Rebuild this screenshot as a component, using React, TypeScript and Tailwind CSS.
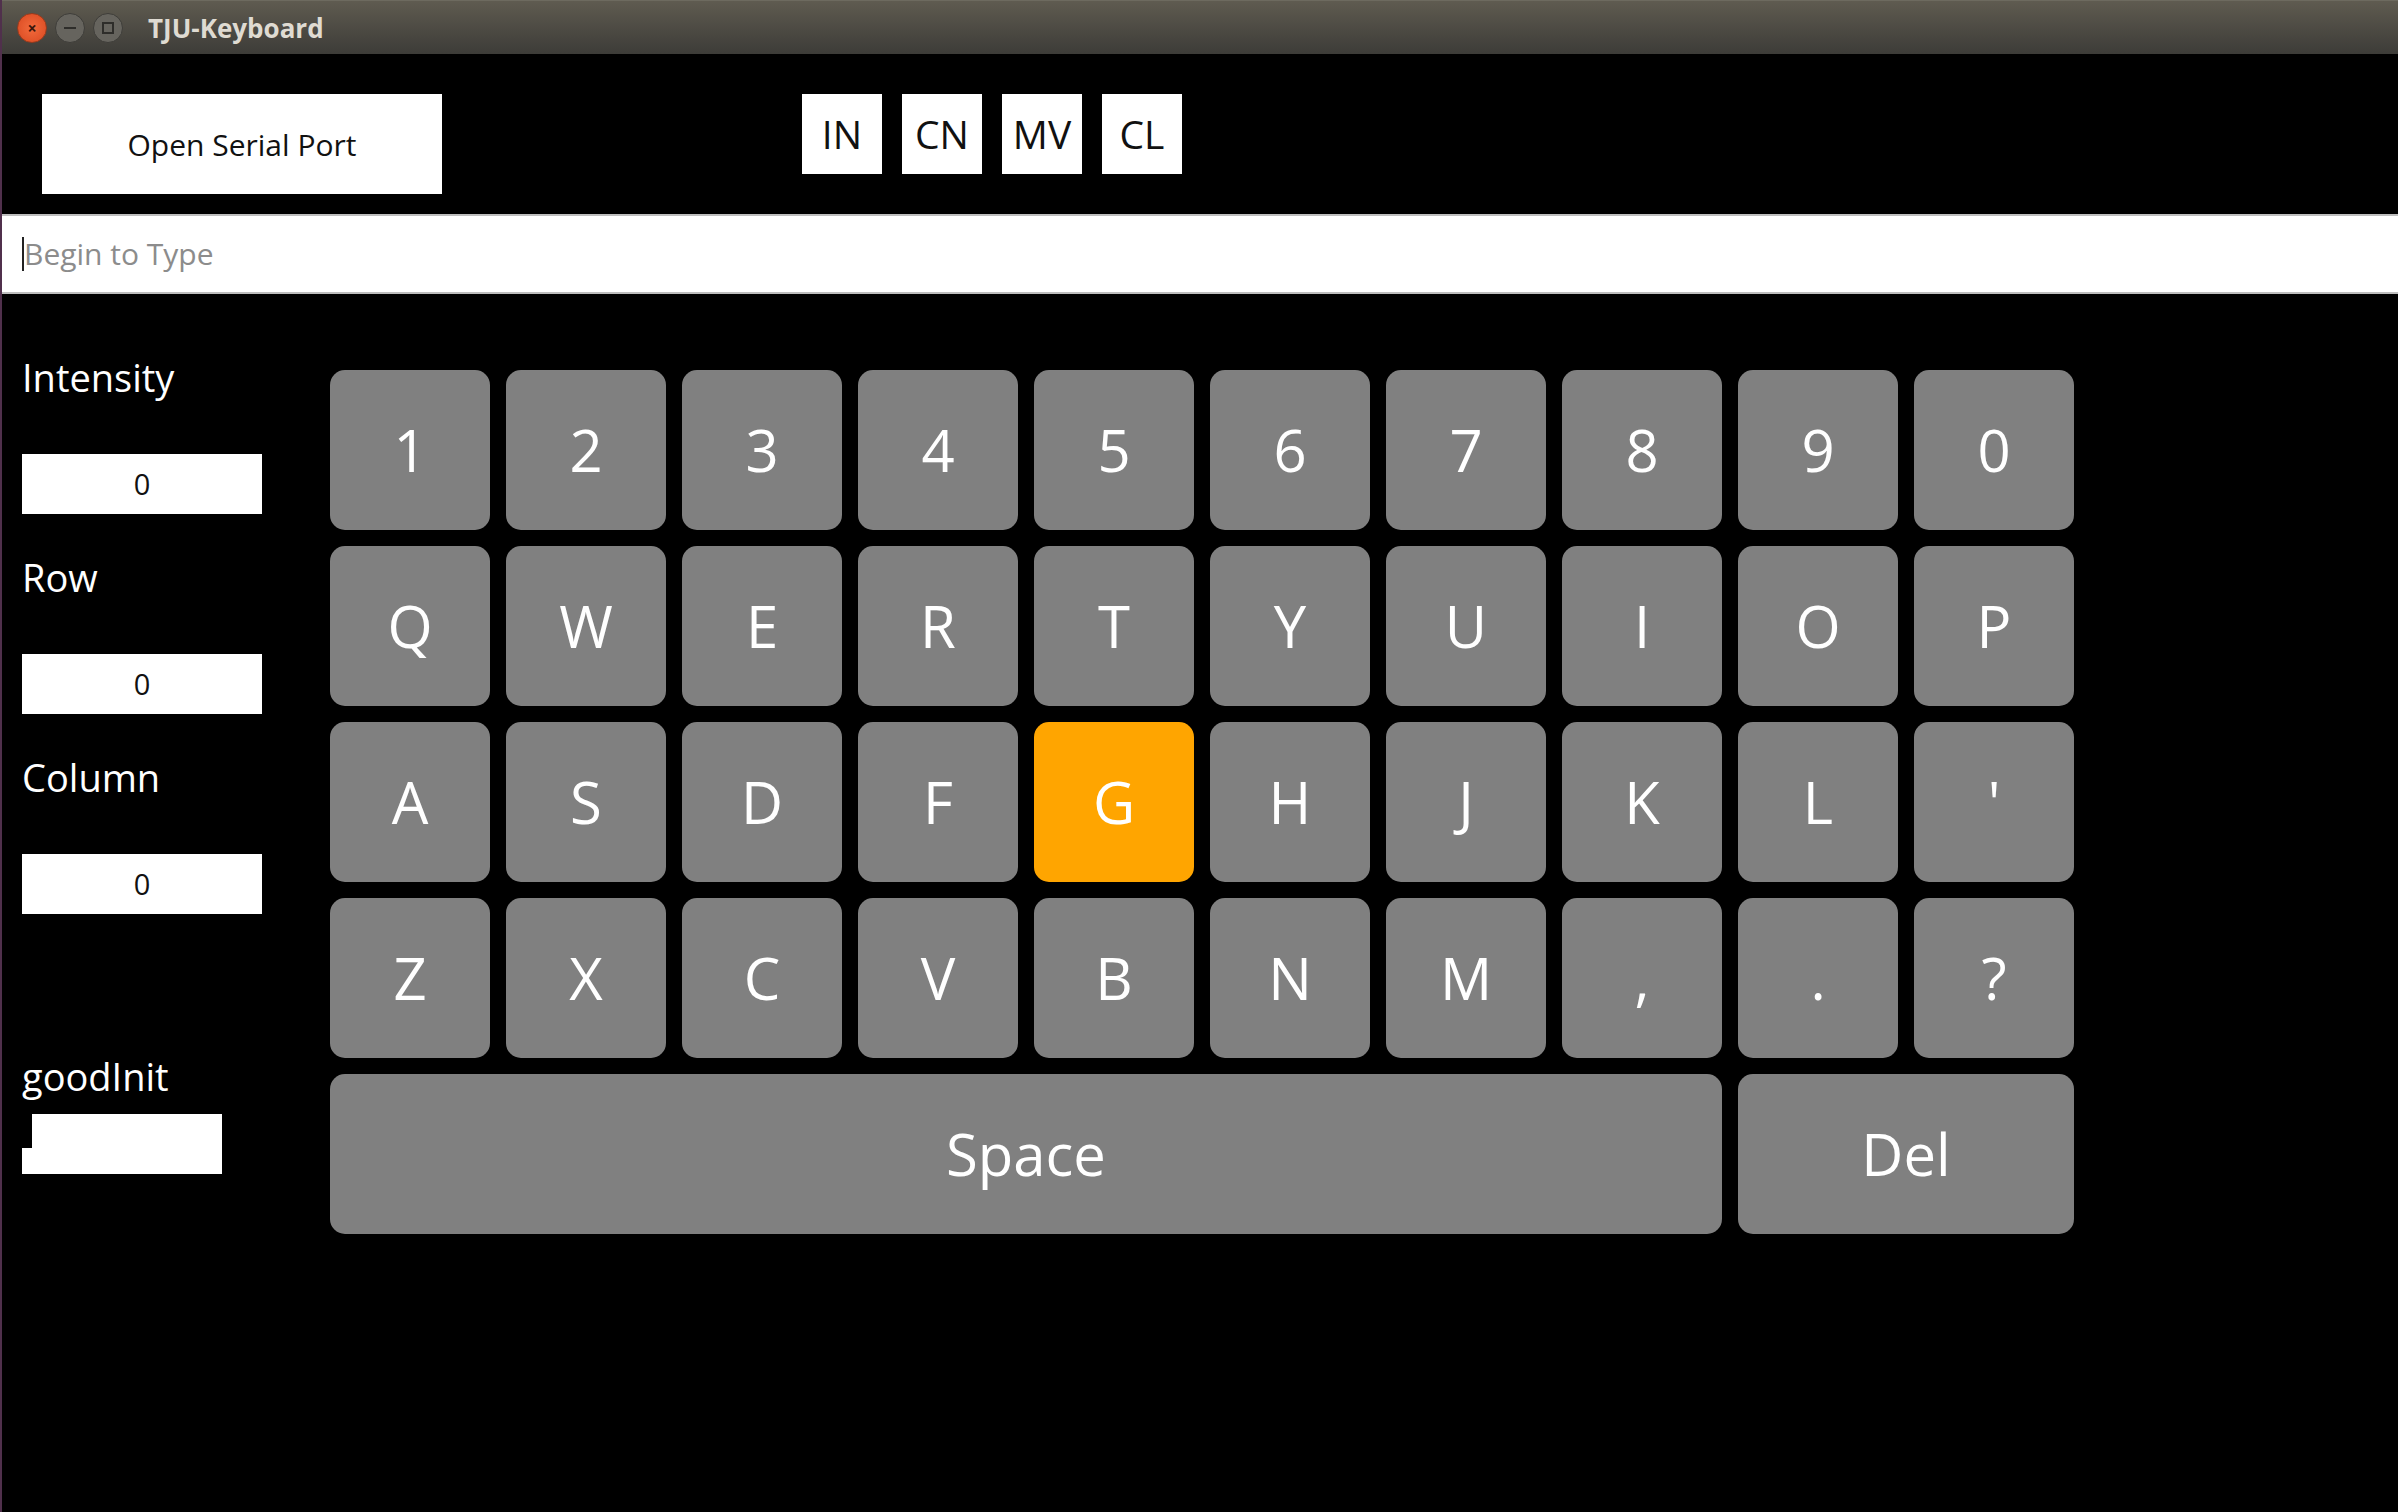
import React from 'react';

const font = { fontFamily: '"Open Sans", "Noto Sans", sans-serif' };

const rows: string[][] = [
  ['1', '2', '3', '4', '5', '6', '7', '8', '9', '0'],
  ['Q', 'W', 'E', 'R', 'T', 'Y', 'U', 'I', 'O', 'P'],
  ['A', 'S', 'D', 'F', 'G', 'H', 'J', 'K', 'L', "'"],
  ['Z', 'X', 'C', 'V', 'B', 'N', 'M', ',', '.', '?'],
];

type KeyProps = { label: string; active?: boolean; wide?: string };

const Key = ({ label, active, wide }: KeyProps) => {
  return (
    <div
      className={`h-[160px] rounded-[15px] flex items-center justify-center text-white text-[58px] leading-none ${
        active ? 'bg-[#ffa500]' : 'bg-[#808080]'
      } ${wide ?? ''}`}
    >
      {label}
    </div>
  );
};

const SideField = ({ label, value }: { label: string; value: string }) => {
  return (
    <div className="flex flex-col">
      <div className="text-white text-[38px] leading-[38px]">{label}</div>
      <div className="mt-[58px] w-[240px] h-[60px] bg-white flex items-center justify-center text-[29px] text-[#111]">
        {value}
      </div>
    </div>
  );
};

const App = () => {
  return (
    <div className="w-[2398px] h-[1512px] bg-black border-l-2 border-[#50304c] flex flex-col overflow-hidden" style={font}>
      {/* title bar */}
      <div className="h-[54px] shrink-0 bg-linear-to-b from-[#5f5b50] to-[#3d3c38] border-t border-[#6d6a5f] flex items-center pl-[15px]">
        <div className="flex items-center gap-2">
          <div className="w-[30px] h-[30px] rounded-full bg-radial from-[#f26a3c] to-[#d9481f] border border-[#9a3a1c] flex items-center justify-center text-[#3a160b] text-[16px] leading-none font-bold">
            ×
          </div>
          <div className="w-[30px] h-[30px] rounded-full bg-[#66645e] border border-[#3e3d39] flex items-center justify-center">
            <div className="w-[12px] h-[2px] bg-[#2e2d2a]" />
          </div>
          <div className="w-[30px] h-[30px] rounded-full bg-[#66645e] border border-[#3e3d39] flex items-center justify-center">
            <div className="w-[12px] h-[12px] border-2 border-[#2e2d2a]" />
          </div>
        </div>
        <div className="ml-[25px] text-[26px] font-bold text-[#dfdbd2] leading-none">TJU-Keyboard</div>
      </div>

      {/* top controls */}
      <div className="h-[160px] shrink-0 flex items-start pt-[40px] pl-[40px]">
        <div className="w-[400px] h-[100px] bg-white flex items-center justify-center text-[30px] text-[#111]">
          Open Serial Port
        </div>
        <div className="ml-[360px] flex gap-5">
          {['IN', 'CN', 'MV', 'CL'].map((t) => (
            <div key={t} className="w-[80px] h-[80px] bg-white flex items-center justify-center text-[39px] text-[#111]">
              {t}
            </div>
          ))}
        </div>
      </div>

      {/* text input */}
      <div className="h-[80px] shrink-0 bg-white border-y-2 border-[#bebebe] flex items-center pl-[20px]">
        <div className="w-[2px] h-[34px] bg-[#222]" />
        <div className="text-[30px] text-[#8c8c8c] leading-none">Begin to Type</div>
      </div>

      {/* main area */}
      <div className="flex">
        <div className="pl-[20px] pt-[64px] flex flex-col gap-[44px] w-[328px] shrink-0">
          <SideField label="Intensity" value="0" />
          <SideField label="Row" value="0" />
          <SideField label="Column" value="0" />
          <div className="flex flex-col mt-[99px]">
            <div className="text-white text-[38px] leading-[38px]">goodInit</div>
            <div className="relative mt-[19px] w-[200px] h-[60px] bg-white">
              <div className="absolute left-0 top-0 w-[10px] h-[34px] bg-black" />
            </div>
          </div>
        </div>

        <div className="pt-[76px] grid grid-cols-[repeat(10,160px)] gap-4">
          {rows.map((r) =>
            r.map((k) => <Key key={k} label={k} active={k === 'G'} />)
          )}
          <Key label="Space" wide="col-span-8" />
          <Key label="Del" wide="col-span-2" />
        </div>
      </div>
    </div>
  );
};

export default App;
